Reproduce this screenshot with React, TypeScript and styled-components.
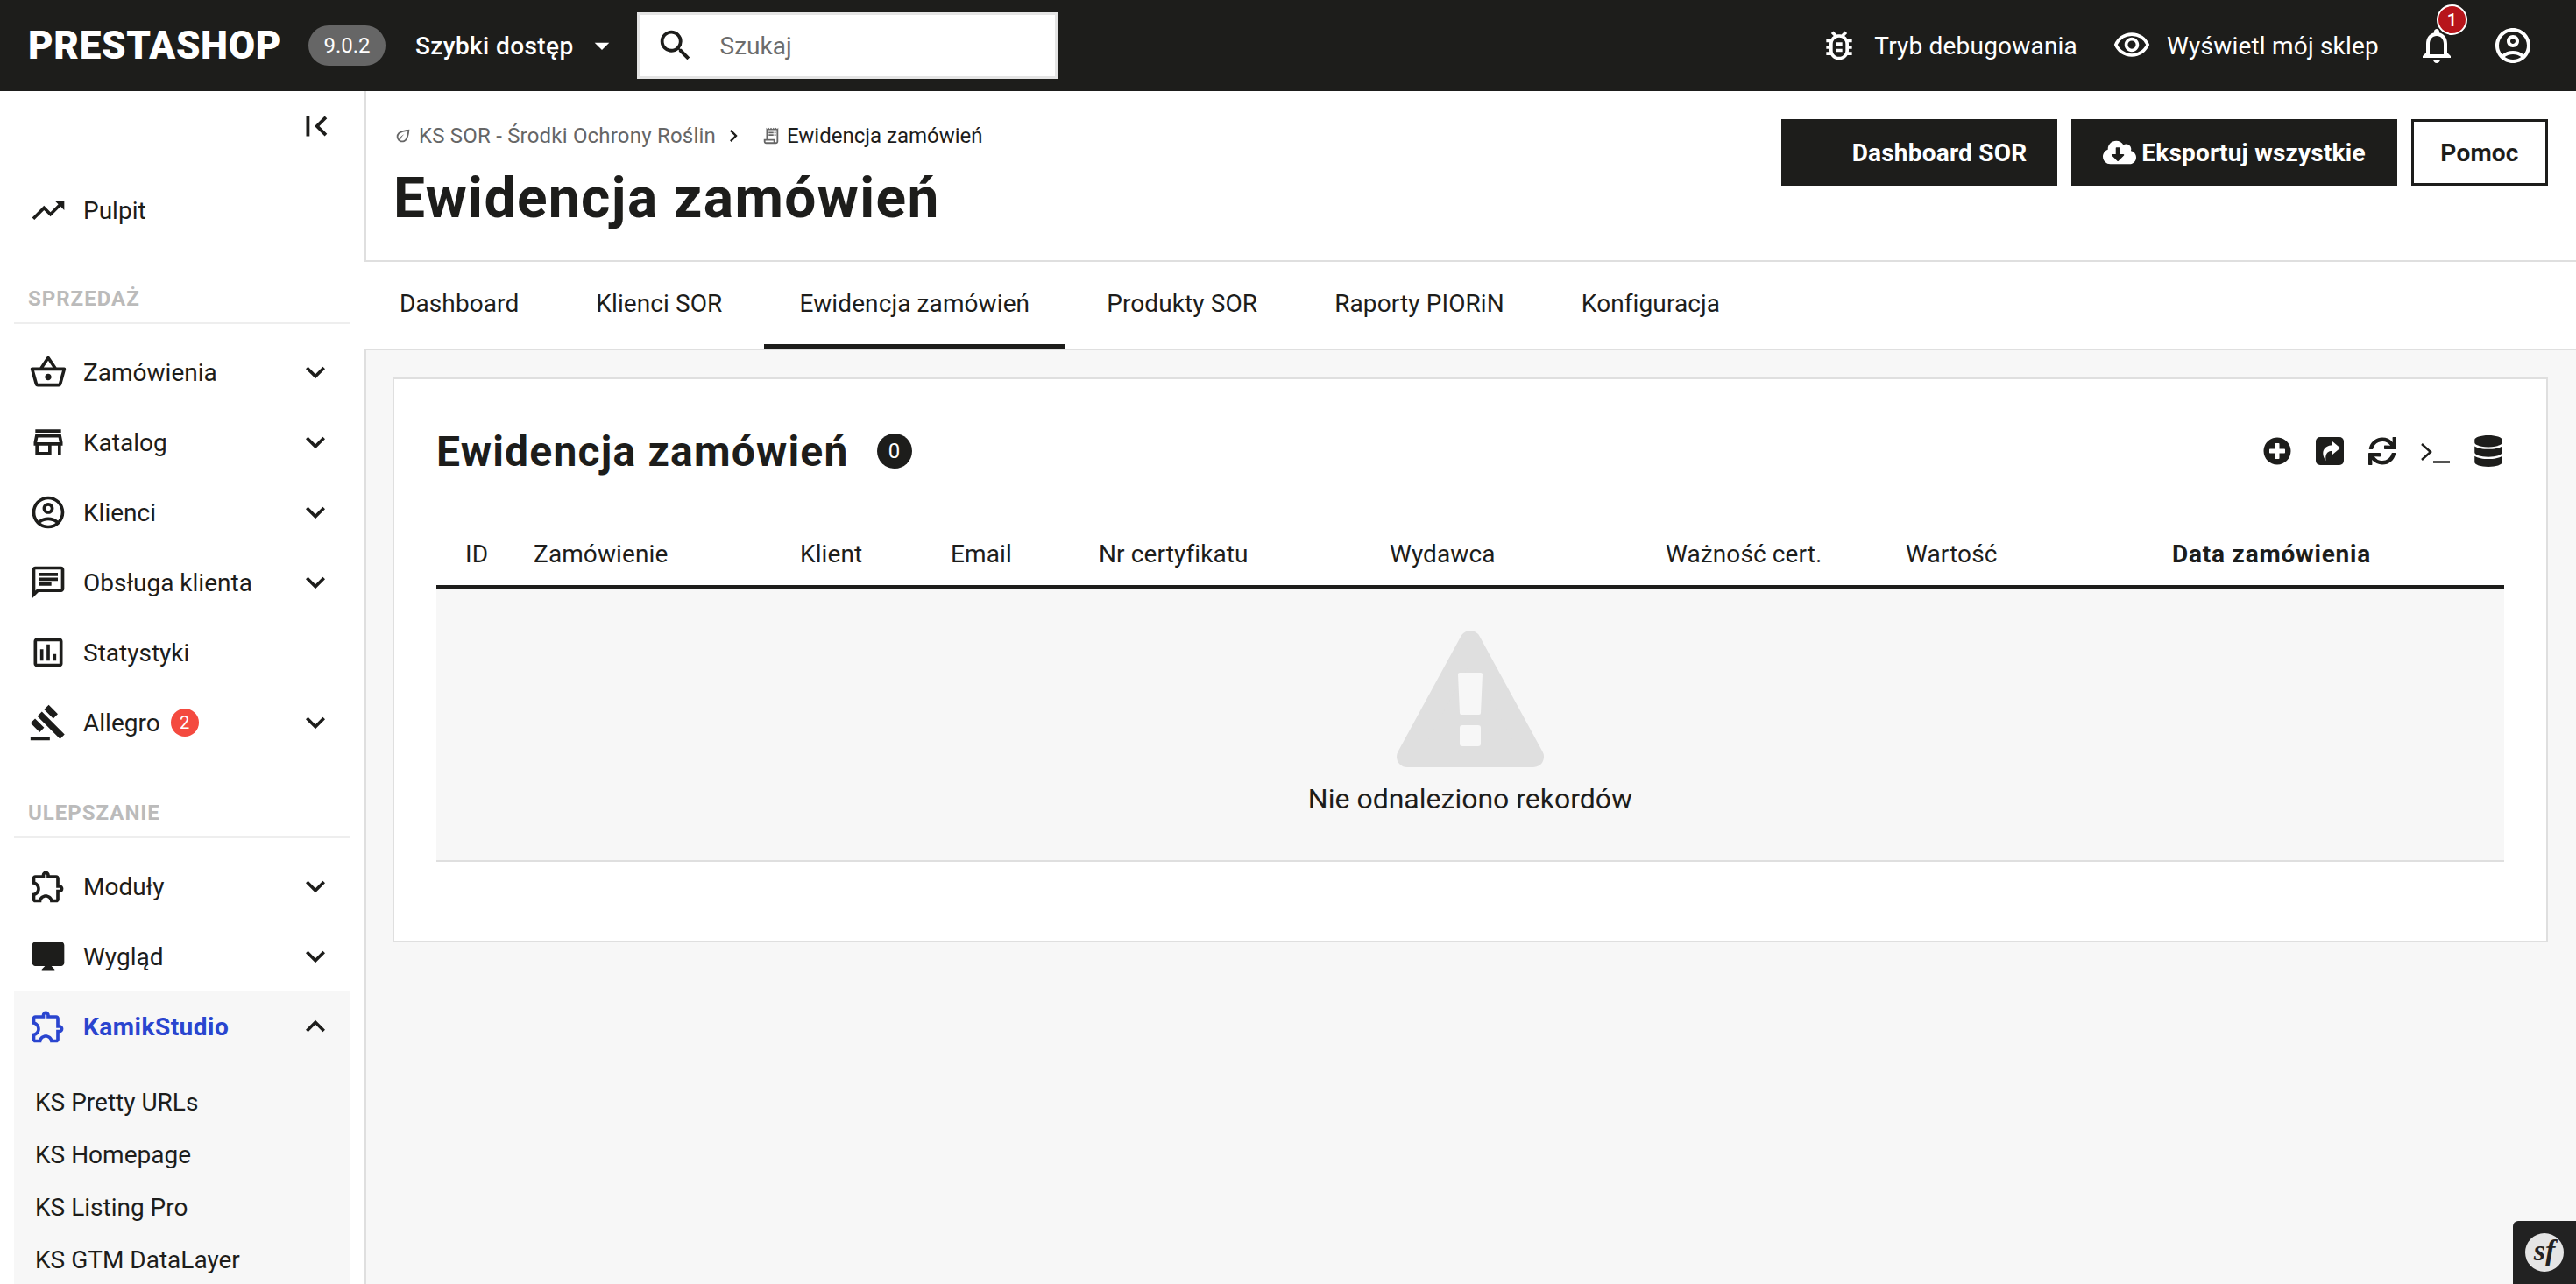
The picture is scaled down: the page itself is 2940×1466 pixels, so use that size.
import styled, { createGlobalStyle } from "styled-components";
import { ReactNode } from "react";
import {
  MdTrendingUp,
  MdOutlineShoppingBasket,
  MdOutlineStore,
  MdOutlineAccountCircle,
  MdOutlineChat,
  MdOutlineAssessment,
  MdOutlineGavel,
  MdOutlineExtension,
  MdDesktopMac,
  MdKeyboardArrowDown,
  MdKeyboardArrowUp,
  MdSearch,
  MdOutlineBugReport,
  MdOutlineVisibility,
  MdNotificationsNone,
  MdFirstPage,
  MdArrowDropDown,
  MdOutlineReceiptLong,
  MdOutlineEco,
  MdChevronRight,
} from "react-icons/md";
import { FaPlusCircle, FaSync, FaDatabase, FaCloudDownloadAlt } from "react-icons/fa";

const INK = "#1d1d1b";
const LINE = "#dfdfdf";
const PANEL = "#f7f7f7";

const GlobalStyle = createGlobalStyle`
  html, body {
    margin: 0;
    padding: 0;
    height: 100%;
    overflow: hidden;
    background: ${PANEL};
  }
  body {
    font-family: Roboto, "Liberation Sans", sans-serif;
    color: ${INK};
  }
  * {
    box-sizing: border-box;
  }
`;

const Page = styled.div`
  display: flex;
  flex-direction: column;
  height: 1466px;
`;

const TopBar = styled.header`
  display: flex;
  align-items: center;
  flex: 0 0 104px;
  padding: 0 48px 0 32px;
  background: ${INK};
  color: #fff;
`;

const Logo = styled.div`
  width: 288px;
  font-size: 44px;
  font-weight: 900;
  letter-spacing: 0.7px;
  white-space: nowrap;
`;

const Version = styled.div`
  display: flex;
  align-items: center;
  justify-content: center;
  width: 88px;
  height: 46px;
  margin-left: 32px;
  border-radius: 23px;
  background: #666;
  font-size: 24px;
`;

const QuickAccess = styled.div`
  display: flex;
  align-items: center;
  margin-left: 34px;
  font-size: 28px;
  font-weight: 500;
  letter-spacing: 0.4px;
  white-space: nowrap;

  svg {
    margin-left: 12px;
    font-size: 40px;
  }
`;

const SearchBox = styled.div`
  display: flex;
  align-items: center;
  width: 480px;
  height: 76px;
  margin-left: 20px;
  padding-left: 18px;
  background: #fff;
  border: 3px solid #e4e4e4;
  color: ${INK};
  font-size: 28px;

  svg {
    font-size: 46px;
  }

  span {
    margin-left: 28px;
    color: #6c6c6c;
  }
`;

const TopRight = styled.div`
  display: flex;
  align-items: center;
  margin-left: auto;
`;

const TopLink = styled.div<{ $gap: number }>`
  display: flex;
  align-items: center;
  margin-right: ${(p) => p.$gap}px;
  font-size: 28px;
  letter-spacing: 0.2px;
  white-space: nowrap;

  svg {
    margin-right: 18px;
    font-size: 44px;
  }
`;

const Bell = styled.div`
  position: relative;
  display: flex;
  margin-right: 39px;
  font-size: 48px;
`;

const BellBadge = styled.span`
  position: absolute;
  top: -23px;
  left: 24px;
  display: flex;
  align-items: center;
  justify-content: center;
  width: 35px;
  height: 35px;
  border: 2px solid #fff;
  border-radius: 50%;
  background: #b7151b;
  font-size: 20px;
  font-weight: 500;
`;

const Profile = styled.div`
  display: flex;
  font-size: 48px;
`;

const Body = styled.div`
  display: flex;
  flex: 1;
  min-height: 0;
`;

const Sidebar = styled.nav`
  flex: 0 0 418px;
  padding: 0 16px;
  overflow: hidden;
  background: #fff;
  border-right: 3px solid ${LINE};
`;

const Collapse = styled.div`
  display: flex;
  justify-content: flex-end;
  height: 96px;
  padding: 17px 15px 0 0;
  font-size: 46px;
`;

const MenuRow = styled.div<{ $active?: boolean }>`
  display: flex;
  align-items: center;
  height: 80px;
  padding: 0 16px 0 17px;
  font-size: 28px;
  font-weight: ${(p) => (p.$active ? 700 : 400)};
  letter-spacing: ${(p) => (p.$active ? "0.5px" : "0")};
  color: ${(p) => (p.$active ? "#2a45cf" : INK)};

  > svg:first-child {
    flex: 0 0 44px;
    font-size: 44px;
    margin-right: 18px;
  }
`;

const MenuChevron = styled.span`
  display: flex;
  margin-left: auto;
  margin-right: 1px;
  color: ${INK};
  font-size: 44px;
`;

const RedBadge = styled.span`
  display: flex;
  align-items: center;
  justify-content: center;
  width: 32px;
  height: 32px;
  margin-left: 12px;
  border-radius: 50%;
  background: #f44a3f;
  color: #fff;
  font-size: 20px;
`;

const SectionTitle = styled.div<{ $top: number }>`
  margin-top: ${(p) => p.$top}px;
  padding: 0 16px 13px;
  border-bottom: 2px solid #eee;
  color: #bbb;
  font-size: 24px;
  font-weight: 700;
  letter-spacing: 1px;
  line-height: 28px;
`;

const SectionBody = styled.div`
  padding-top: 15px;
`;

const ActiveGroup = styled.div`
  background: ${PANEL};
  height: 400px;
`;

const SubItem = styled.div`
  display: flex;
  align-items: center;
  height: 60px;
  padding-left: 24px;
  font-size: 28px;
`;

const SubList = styled.div`
  padding-top: 16px;
`;

const Main = styled.main`
  flex: 1;
  min-width: 0;
`;

const Header = styled.div`
  display: flex;
  justify-content: space-between;
  height: 195px;
  padding: 32px 32px 0 31px;
  background: #fff;
  border-bottom: 2px solid ${LINE};
`;

const Breadcrumb = styled.div`
  display: flex;
  align-items: center;
  height: 32px;
  margin-top: 3px;
  font-size: 24px;
  letter-spacing: 0.2px;
  color: #666;
  white-space: nowrap;

  svg {
    font-size: 22px;
    margin-right: 7px;
  }
`;

const CrumbSep = styled.span`
  display: flex;
  margin: 0 18px 0 6px;
  color: ${INK};

  svg {
    font-size: 28px;
    margin: 0;
  }
`;

const CrumbCurrent = styled.span`
  color: ${INK};
  letter-spacing: 0;
`;

const PageTitle = styled.h1`
  margin: 18px 0 0;
  font-size: 64px;
  font-weight: 700;
  letter-spacing: 1.4px;
  line-height: 76px;
  white-space: nowrap;
`;

const Actions = styled.div`
  display: flex;
  gap: 16px;
`;

const ActionButton = styled.div<{ $outline?: boolean; $width: number }>`
  display: flex;
  align-items: center;
  justify-content: center;
  gap: 6px;
  width: ${(p) => p.$width}px;
  height: 76px;
  border: 3px solid ${INK};
  background: ${(p) => (p.$outline ? "#fff" : INK)};
  color: ${(p) => (p.$outline ? INK : "#fff")};
  font-size: 28px;
  font-weight: 700;
  letter-spacing: 0.2px;
  white-space: nowrap;

  svg {
    font-size: 38px;
  }
`;

const DashboardLabel = styled.span`
  margin-left: 46px;
`;

const Tabs = styled.div`
  display: flex;
  gap: 8px;
  height: 101px;
  padding-bottom: 2px;
  margin-left: -2px;
  background: #fff;
  border-bottom: 2px solid ${LINE};
`;

const Tab = styled.div<{ $active?: boolean }>`
  display: flex;
  align-items: center;
  padding: 0 40px;
  border-bottom: 6px solid ${(p) => (p.$active ? INK : "transparent")};
  margin-bottom: -3px;
  font-size: 28px;
  letter-spacing: 0.1px;
  white-space: nowrap;
`;

const Content = styled.div`
  padding: 31px 32px 0 30px;
`;

const Card = styled.section`
  padding: 48px 48px 90px;
  background: #fff;
  border: 2px solid ${LINE};
`;

const CardHeader = styled.div`
  display: flex;
  align-items: center;
  height: 68px;
`;

const CardTitle = styled.h2`
  margin: 0;
  font-size: 48px;
  font-weight: 700;
  letter-spacing: 1.2px;
  white-space: nowrap;
`;

const CountBadge = styled.span`
  display: flex;
  align-items: center;
  justify-content: center;
  width: 40px;
  height: 40px;
  margin-left: 32px;
  border-radius: 50%;
  background: ${INK};
  color: #fff;
  font-size: 24px;
`;

const Tools = styled.div`
  display: flex;
  align-items: center;
  gap: 28px;
  margin-left: auto;
  margin-right: 2px;
  font-size: 32px;

  svg:last-child {
    margin: 0 -2px;
    font-size: 36px;
  }
`;

const TableHead = styled.div`
  display: grid;
  grid-template-columns: 78px 304px 172px 169px 332px 315px 274px 304px 1fr;
  align-items: center;
  height: 76px;
  margin-top: 47px;
  border-bottom: 4px solid ${INK};
`;

const HeadCell = styled.div<{ $sorted?: boolean }>`
  padding-left: 33px;
  font-size: 28px;
  font-weight: ${(p) => (p.$sorted ? 700 : 400)};
  letter-spacing: ${(p) => (p.$sorted ? "0.8px" : "0.1px")};
  white-space: nowrap;
`;

const EmptyRow = styled.div`
  display: flex;
  flex-direction: column;
  align-items: center;
  height: 312px;
  padding-top: 48px;
  background: ${PANEL};
  border-bottom: 2px solid ${LINE};
`;

const EmptyText = styled.div`
  margin-top: 16px;
  font-size: 32px;
  line-height: 40px;
`;

const DebugToolbar = styled.div`
  position: fixed;
  right: 0;
  bottom: 0;
  display: flex;
  justify-content: center;
  width: 72px;
  height: 72px;
  padding-top: 14px;
  border-top-left-radius: 6px;
  background: #222;
`;

const DebugLogo = styled.div`
  width: 44px;
  height: 44px;
  border-radius: 50%;
  background: #e5e5e5;
  color: #222;
  font-family: "Liberation Serif", serif;
  font-size: 34px;
  font-style: italic;
  font-weight: 700;
  line-height: 40px;
  text-align: center;
`;

function WarningIcon() {
  return (
    <svg width="168" height="156" viewBox="0 0 168 156">
      <polygon
        points="84,12 156,144 12,144"
        fill={LINE}
        stroke={LINE}
        strokeWidth="24"
        strokeLinejoin="round"
      />
      <path d="M72 48h24a2 2 0 0 1 2 2l-2 44a2 2 0 0 1-2 2H74a2 2 0 0 1-2-2l-2-44a2 2 0 0 1 2-2z" fill={PANEL} />
      <rect x="72" y="108" width="24" height="24" rx="3" fill={PANEL} />
    </svg>
  );
}

// FA4 style share-square, the FA5 one in react-icons is an open box
function ShareSquareIcon() {
  return (
    <svg width="32" height="32" viewBox="0 0 32 32">
      <rect width="32" height="32" rx="5" fill={INK} />
      <path d="M19 5l9 7.5-9 7.5v-4.200c-5.500 0-8.500 3.500-7.500 11.200C6 20 7 10 19 9.200z" fill="#fff" />
    </svg>
  );
}

function TerminalIcon() {
  return (
    <svg width="33" height="32" viewBox="0 0 33 32" fill="none" stroke={INK} strokeWidth="2.500">
      <path d="M1 8l10 9-10 9" />
      <path d="M14 28.500h19" />
    </svg>
  );
}

interface MenuItem {
  label: string;
  icon: ReactNode;
  chevron?: boolean;
  badge?: string;
}

const salesItems: MenuItem[] = [
  { label: "Zamówienia", icon: <MdOutlineShoppingBasket />, chevron: true },
  { label: "Katalog", icon: <MdOutlineStore />, chevron: true },
  { label: "Klienci", icon: <MdOutlineAccountCircle />, chevron: true },
  { label: "Obsługa klienta", icon: <MdOutlineChat />, chevron: true },
  { label: "Statystyki", icon: <MdOutlineAssessment /> },
  { label: "Allegro", icon: <MdOutlineGavel />, chevron: true, badge: "2" },
];

const improveItems: MenuItem[] = [
  { label: "Moduły", icon: <MdOutlineExtension />, chevron: true },
  { label: "Wygląd", icon: <MdDesktopMac />, chevron: true },
];

const subItems = ["KS Pretty URLs", "KS Homepage", "KS Listing Pro", "KS GTM DataLayer"];

const tabs = ["Dashboard", "Klienci SOR", "Ewidencja zamówień", "Produkty SOR", "Raporty PIORiN", "Konfiguracja"];

const columns = ["ID", "Zamówienie", "Klient", "Email", "Nr certyfikatu", "Wydawca", "Ważność cert.", "Wartość", "Data zamówienia"];

function Menu({ items }: { items: MenuItem[] }) {
  return (
    <>
      {items.map((item) => (
        <MenuRow key={item.label}>
          {item.icon}
          {item.label}
          {item.badge && <RedBadge>{item.badge}</RedBadge>}
          {item.chevron && (
            <MenuChevron>
              <MdKeyboardArrowDown />
            </MenuChevron>
          )}
        </MenuRow>
      ))}
    </>
  );
}

export default function App() {
  return (
    <Page>
      <GlobalStyle />
      <TopBar>
        <Logo>PRESTASHOP</Logo>
        <Version>9.0.2</Version>
        <QuickAccess>
          Szybki dostęp
          <MdArrowDropDown />
        </QuickAccess>
        <SearchBox>
          <MdSearch />
          <span>Szukaj</span>
        </SearchBox>
        <TopRight>
          <TopLink $gap={40}>
            <MdOutlineBugReport />
            Tryb debugowania
          </TopLink>
          <TopLink $gap={42}>
            <MdOutlineVisibility />
            Wyświetl mój sklep
          </TopLink>
          <Bell>
            <MdNotificationsNone />
            <BellBadge>1</BellBadge>
          </Bell>
          <Profile>
            <MdOutlineAccountCircle />
          </Profile>
        </TopRight>
      </TopBar>
      <Body>
        <Sidebar>
          <Collapse>
            <MdFirstPage />
          </Collapse>
          <MenuRow>
            <MdTrendingUp />
            Pulpit
          </MenuRow>
          <SectionTitle $top={47}>SPRZEDAŻ</SectionTitle>
          <SectionBody>
            <Menu items={salesItems} />
          </SectionBody>
          <SectionTitle $top={49}>ULEPSZANIE</SectionTitle>
          <SectionBody>
            <Menu items={improveItems} />
            <ActiveGroup>
              <MenuRow $active>
                <MdOutlineExtension />
                KamikStudio
                <MenuChevron>
                  <MdKeyboardArrowUp />
                </MenuChevron>
              </MenuRow>
              <SubList>
                {subItems.map((name) => (
                  <SubItem key={name}>{name}</SubItem>
                ))}
              </SubList>
            </ActiveGroup>
          </SectionBody>
        </Sidebar>
        <Main>
          <Header>
            <div>
              <Breadcrumb>
                <MdOutlineEco />
                KS SOR - Środki Ochrony Roślin
                <CrumbSep>
                  <MdChevronRight />
                </CrumbSep>
                <MdOutlineReceiptLong />
                <CrumbCurrent>Ewidencja zamówień</CrumbCurrent>
              </Breadcrumb>
              <PageTitle>Ewidencja zamówień</PageTitle>
            </div>
            <Actions>
              <ActionButton $width={315}>
                <DashboardLabel>Dashboard SOR</DashboardLabel>
              </ActionButton>
              <ActionButton $width={372}>
                <FaCloudDownloadAlt />
                Eksportuj wszystkie
              </ActionButton>
              <ActionButton $width={156} $outline>
                Pomoc
              </ActionButton>
            </Actions>
          </Header>
          <Tabs>
            {tabs.map((tab) => (
              <Tab key={tab} $active={tab === "Ewidencja zamówień"}>
                {tab}
              </Tab>
            ))}
          </Tabs>
          <Content>
            <Card>
              <CardHeader>
                <CardTitle>Ewidencja zamówień</CardTitle>
                <CountBadge>0</CountBadge>
                <Tools>
                  <FaPlusCircle />
                  <ShareSquareIcon />
                  <FaSync />
                  <TerminalIcon />
                  <FaDatabase />
                </Tools>
              </CardHeader>
              <TableHead>
                {columns.map((col) => (
                  <HeadCell key={col} $sorted={col === "Data zamówienia"}>
                    {col}
                  </HeadCell>
                ))}
              </TableHead>
              <EmptyRow>
                <WarningIcon />
                <EmptyText>Nie odnaleziono rekordów</EmptyText>
              </EmptyRow>
            </Card>
          </Content>
        </Main>
      </Body>
      <DebugToolbar>
        <DebugLogo>sf</DebugLogo>
      </DebugToolbar>
    </Page>
  );
}
